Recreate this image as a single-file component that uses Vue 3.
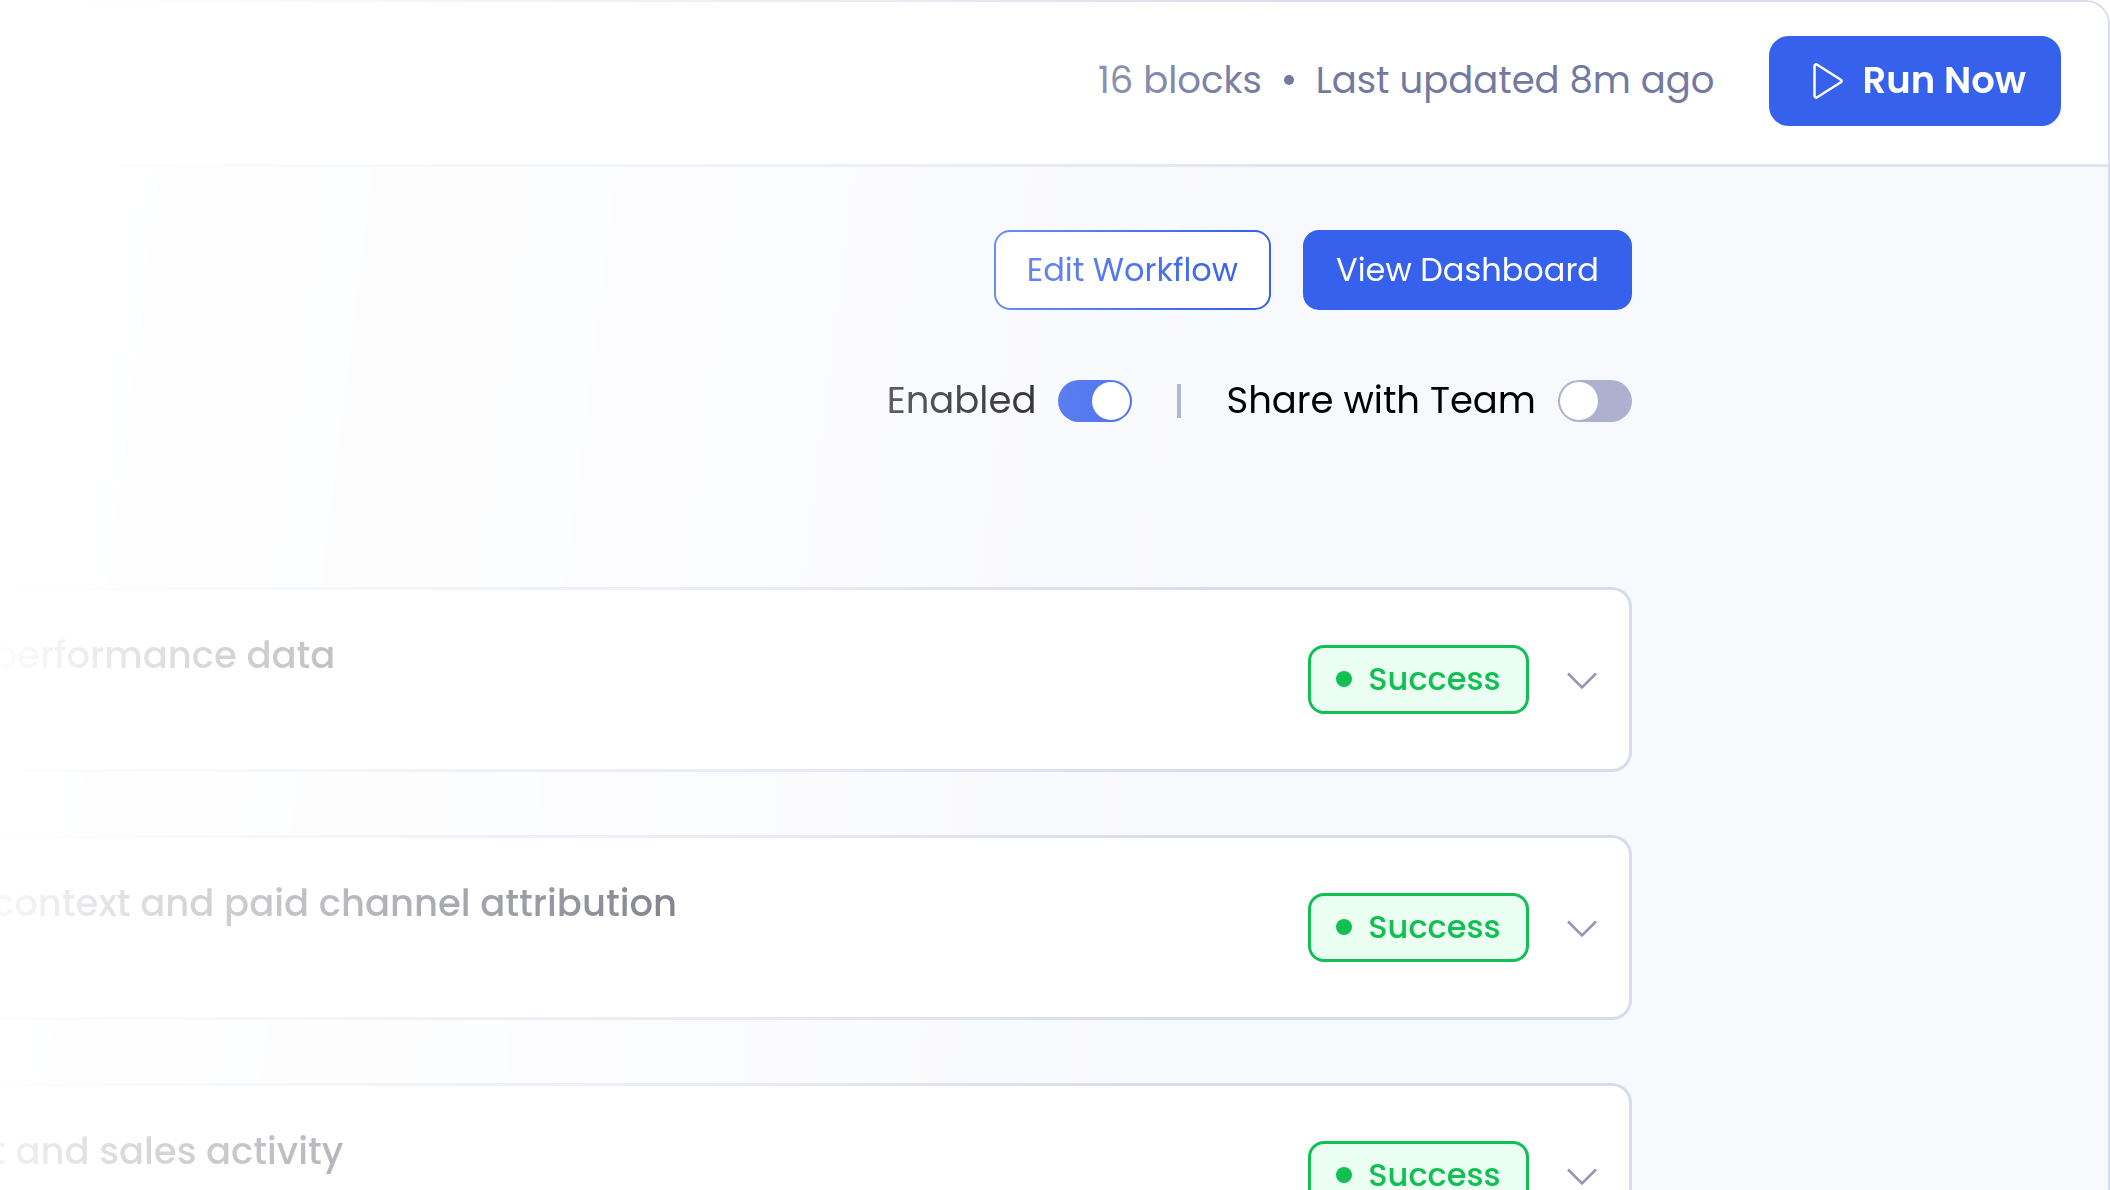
<script setup>
import { ref } from 'vue'

const enabled = ref(true)
const shared = ref(false)

const steps = [
  { id: 1, title: 'performance data', status: 'Success' },
  { id: 2, title: 'context and paid channel attribution', status: 'Success' },
  { id: 3, title: 't and sales activity', status: 'Success' },
]
</script>

<template>
  <div class="shell">
    <header class="topbar">
      <p class="meta">
        <span>16 blocks</span>
        <span class="meta-dot"></span>
        <span>Last updated 8m ago</span>
      </p>
      <button type="button" class="btn run">
        <svg class="play" viewBox="0 0 30 36" aria-hidden="true">
          <path d="M1.500 3.200v29.600c0 1.500 1.400 2.300 2.700 1.500l23.600-15c1.100-.7 1.100-1.900 0-2.600L4.200 1.700C2.900.9 1.500 1.700 1.500 3.200Z" />
        </svg>
        <span>Run Now</span>
      </button>
    </header>

    <main class="content">
      <div class="actions">
        <button type="button" class="btn outline">Edit Workflow</button>
        <button type="button" class="btn solid">View Dashboard</button>
      </div>

      <div class="toggles">
        <label class="toggle">
          <span>Enabled</span>
          <input v-model="enabled" type="checkbox" />
        </label>
        <span class="divider"></span>
        <label class="toggle">
          <span>Share with Team</span>
          <input v-model="shared" type="checkbox" />
        </label>
      </div>

      <section class="steps">
        <article v-for="step in steps" :key="step.id" class="step">
          <h2 class="step-title">{{ step.title }}</h2>
          <span class="badge">{{ step.status }}</span>
          <button type="button" class="expand" aria-label="Show details">
            <svg viewBox="0 0 30 17" aria-hidden="true">
              <path d="M1 1.500 15 15.500 29 1.500" />
            </svg>
          </button>
        </article>
      </section>
    </main>
  </div>
</template>

<style>
body {
  margin: 0;
  background: #fff;
}
</style>

<style scoped>
.shell {
  display: flex;
  flex-direction: column;
  box-sizing: border-box;
  height: 100vh;
  overflow: hidden;
  border-top: 2px solid #d8dcec;
  border-right: 2px solid #d8dcec;
  border-top-right-radius: 24px;
  background: #f8f9fd;
  color: #000;
  font-family: Poppins, Inter, sans-serif;
  font-size: 37px;
  line-height: 54px;
  mask-image: linear-gradient(
    97deg,
    transparent 3%,
    rgba(0, 0, 0, 0.26) 18%,
    rgba(0, 0, 0, 0.6) 40%,
    #000 57%
  );
}

.topbar {
  display: flex;
  flex: none;
  align-items: center;
  justify-content: flex-end;
  gap: 54px;
  box-sizing: border-box;
  height: 165px;
  padding: 0 47px 4px 0;
  border-bottom: 3px solid #e0e5f2;
  background: #fff;
}

.meta {
  display: flex;
  align-items: center;
  gap: 22px;
  margin: 0;
  padding-bottom: 2px;
  color: #747a9f;
}

.meta-dot {
  width: 10px;
  height: 10px;
  border-radius: 50%;
  background: #747a9f;
}

.btn {
  display: flex;
  align-items: center;
  justify-content: center;
  box-sizing: border-box;
  height: 80px;
  padding: 0 31px;
  border: 2px solid #3661ed;
  border-radius: 16px;
  background: #3661ed;
  color: #fff;
  font: inherit;
  font-size: 32px;
  white-space: nowrap;
  cursor: pointer;
}

.btn.run {
  gap: 20px;
  height: 90px;
  padding: 0 33px 0 42px;
  border-radius: 20px;
  font-size: 37px;
  font-weight: 600;
}

.btn.run span {
  padding-bottom: 2px;
}

.btn.outline {
  background: #fff;
  color: #3661ed;
}

.play {
  width: 30px;
  height: 36px;
  fill: none;
  stroke: #fff;
  stroke-width: 2.5;
  stroke-linejoin: round;
}

.content {
  display: flex;
  flex-direction: column;
  padding: 63px 476px 0 0;
}

.actions {
  display: flex;
  justify-content: flex-end;
  gap: 32px;
}

.toggles {
  display: flex;
  align-items: center;
  justify-content: flex-end;
  margin-top: 63px;
}

.toggle {
  display: flex;
  align-items: center;
  gap: 22px;
}

.toggle span {
  padding-bottom: 2px;
}

.toggle input {
  display: flex;
  box-sizing: border-box;
  width: 74px;
  height: 42px;
  margin: 0;
  padding: 2px;
  border-radius: 21px;
  background: #adb1cf;
  appearance: none;
  cursor: pointer;
}

.toggle input::before {
  width: 38px;
  height: 38px;
  border-radius: 50%;
  background: #fff;
  content: '';
}

.toggle input:checked {
  justify-content: flex-end;
  background: #3661ed;
}

.divider {
  width: 4px;
  height: 34px;
  margin: 0 45px;
  background: #adb1cf;
}

.steps {
  display: flex;
  flex-direction: column;
  gap: 63px;
  margin-top: 158px;
}

.step {
  display: flex;
  align-items: center;
  box-sizing: border-box;
  height: 185px;
  padding-right: 32px;
  border: 3px solid #d8dcec;
  border-left: 0;
  border-radius: 0 20px 20px 0;
  background: #fff;
}

.step-title {
  flex: 1;
  align-self: flex-start;
  margin: 38px 0 0 -8px;
  color: #111326;
  font-size: 37px;
  font-weight: 500;
  white-space: nowrap;
}

.badge {
  display: flex;
  align-items: center;
  justify-content: center;
  gap: 16px;
  box-sizing: border-box;
  width: 221px;
  height: 69px;
  padding-bottom: 1px;
  border: 3px solid #12bf53;
  border-radius: 16px;
  background: #eafef2;
  color: #12bf53;
  font-size: 32px;
  font-weight: 500;
}

.badge::before {
  width: 16px;
  height: 16px;
  border-radius: 50%;
  background: #12bf53;
  content: '';
}

.expand {
  display: flex;
  margin-left: 38px;
  padding: 2px 0 0;
  border: 0;
  background: none;
  cursor: pointer;
}

.expand svg {
  width: 30px;
  height: 17px;
  fill: none;
  stroke: #9498b8;
  stroke-width: 2.5;
}
</style>
